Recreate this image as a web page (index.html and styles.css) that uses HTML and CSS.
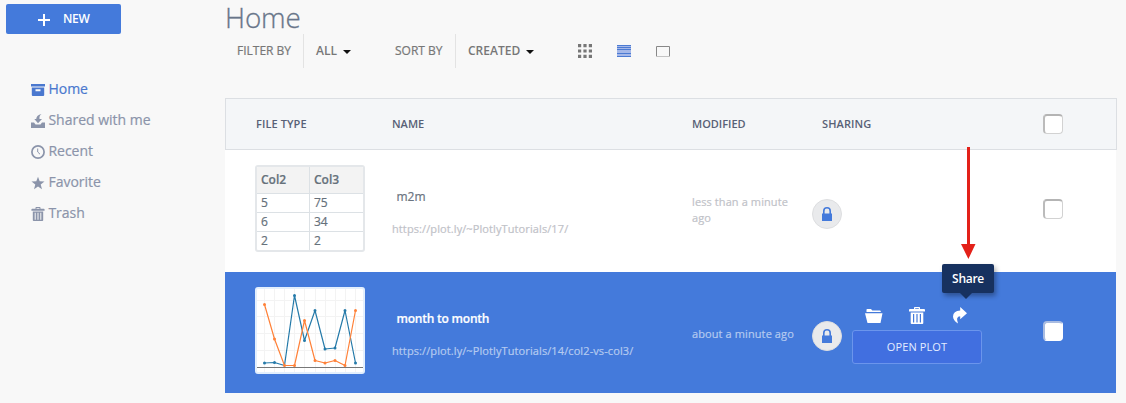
FILE: index.html
```html
<!DOCTYPE html>
<html lang="en">
<head>
<meta charset="utf-8">
<title>Home</title>
<link rel="stylesheet" href="styles.css">
</head>
<body>
<svg class="defs" width="0" height="0">
  <symbol id="trash" viewBox="0 0 16 17"><path fill-rule="evenodd" d="M5 2V.8Q5 0 5.8 0h4.4q.8 0 .8.8V2h4q1 0 1 1v1.5H0V3q0-1 1-1zM6.2 1.2V2h3.6v-.8zM1.7 5.5h12.6V16q0 1-1 1H2.700q-1 0-1-1zM4 7v8.500h1.200V7zm3.400 0v8.500h1.200V7zm3.400 0v8.500H12V7z"/></symbol>
  <symbol id="lock" viewBox="0 0 10 14"><path d="M0 6.500h1V4a4 4 0 0 1 8 0v2.500h1V14H0zM2.600 6.500h4.800V4a2.400 2.400 0 0 0-4.800 0z"/></symbol>
</svg>
<div class="app">
  <aside class="sidebar">
    <button class="new"><svg width="12" height="12" viewBox="0 0 12 12"><path d="M6 0v12M0 6h12" stroke="#fff" stroke-width="2"/></svg><span>NEW</span></button>
    <nav class="nav">
      <a class="nav-item active"><svg width="14" height="12" viewBox="0 0 14 12"><path fill-rule="evenodd" d="M0 0h14v2.500H0zM.8 3.500h12.400V11q0 1-1 1H1.800q-1 0-1-1zM4.500 5.300v2h5v-2z"/></svg><span>Home</span></a>
      <a class="nav-item"><svg width="14" height="14" viewBox="0 0 14 14"><path d="M0 8.500h3l1.500 2h5l1.500-2h3V14H0zM10.500 0Q8 1.500 8.500 5H11L7 9.300 3.300 5h1.900Q5.500 1 10.500 0z"/></svg><span>Shared with me</span></a>
      <a class="nav-item"><svg width="14" height="14" viewBox="0 0 14 14"><g fill="none" stroke="currentColor"><circle cx="7" cy="7" r="6.100" stroke-width="1.700"/><path d="M6.700 3.500V7l2.300 2.200" stroke-width="1"/></g></svg><span>Recent</span></a>
      <a class="nav-item"><svg width="14" height="14" viewBox="0 0 14 14"><path d="M7 .8l1.700 4.400 4.800.2-3.800 3 1.300 4.800L7 10.500l-4 2.700 1.300-4.800-3.800-3 4.800-.2z"/></svg><span>Favorite</span></a>
      <a class="nav-item"><svg width="14" height="14"><use href="#trash"/></svg><span>Trash</span></a>
    </nav>
  </aside>
  <main class="main">
    <h1 class="title">Home</h1>
    <div class="toolbar">
      <span class="label filter">FILTER BY</span>
      <span class="choice all">ALL<i class="caret"></i></span>
      <span class="label sort">SORT BY</span>
      <span class="choice created">CREATED<i class="caret"></i></span>
      <span class="views">
        <svg width="14" height="14" viewBox="0 0 14 14"><path fill="#777" d="M0 0h3.200v3.200H0zM5.400 0h3.200v3.200H5.400zM10.800 0H14v3.200h-3.200zM0 5.400h3.200v3.200H0zM5.400 5.400h3.200v3.200H5.400zM10.800 5.400H14v3.200h-3.200zM0 10.800h3.200V14H0zM5.400 10.800h3.200V14H5.400zM10.800 10.800H14V14h-3.200z"/></svg>
        <svg width="14" height="12" viewBox="0 0 14 12"><path fill="#a5b8e9" d="M0 0h14v12H0z"/><path stroke="#4c7bd3" d="M0 .5h14M0 2.500h14M0 4.500h14M0 8.500h14M0 11.500h14"/></svg>
        <svg width="14" height="11" viewBox="0 0 14 11"><path fill="none" stroke="#888" d="M13.500 10V.5H.5V10"/><path stroke="#c4c4c4" d="M0 10.500h14"/></svg>
      </span>
    </div>
    <section class="files">
      <div class="row head">
        <span class="h-type">FILE TYPE</span><span class="h-name">NAME</span><span class="h-mod">MODIFIED</span><span class="h-share">SHARING</span><span class="check"></span>
      </div>
      <div class="row file">
        <div class="thumb grid">
          <b>Col2</b><b>Col3</b><span>5</span><span>75</span><span>6</span><span>34</span><span>2</span><span>2</span>
        </div>
        <div class="info"><div class="name">m2m</div><div class="url">https://plot.ly/~PlotlyTutorials/17/</div></div>
        <div class="modified">less than a minute<br>ago</div>
        <div class="privacy"><svg width="10" height="14"><use href="#lock"/></svg></div>
        <div></div>
        <span class="check"></span>
      </div>
      <div class="row file selected">
        <div class="thumb plot">
          <svg width="106" height="83" viewBox="0 0 106 83">
            <path stroke="#f3f3f3" fill="none" d="M7.500 0v83M17.500 0v83M27.500 0v83M37.500 0v83M47.500 0v83M58.500 0v83M68.500 0v83M78.500 0v83M88.500 0v83M98.500 0v83M0 11.500h106M0 27.500h106M0 44.500h106M0 61.500h106"/>
            <path stroke="#777" d="M0 78.500h106"/>
            <g fill="none" stroke-width="1.200" stroke-linejoin="round">
              <path class="blue" d="M7.500 74l10-.5 10 3 10-70 10 45 10.500-30 10 38.500 10-1 10-37.500 10.500 52.500"/>
              <path class="orange" d="M7.500 15.500l10 34.500 10 26.500h10l10-45 10.500 40 10 2.500 10-2.500 10 5 10.500-55"/>
            </g>
            <path class="blue dots" d="M7.500 74h0M17.500 73.500h0M37.500 6.500h0M47.500 51.500h0M58 21.500h0M68 60h0M78 59h0M88 21.500h0M98.500 74h0"/>
            <path class="orange dots" d="M7.500 15.500h0M17.500 50h0M27.500 76.500h0M37.500 76.500h0M47.500 31.500h0M58 71.500h0M68 74h0M78 71.500h0M88 76.500h0M98.500 21.500h0"/>
          </svg>
        </div>
        <div class="info"><div class="name">month to month</div><div class="url">https://plot.ly/~PlotlyTutorials/14/col2-vs-col3/</div></div>
        <div class="modified">about a minute ago</div>
        <div class="privacy"><svg width="10" height="14"><use href="#lock"/></svg></div>
        <div class="actions">
          <div class="icons">
            <svg width="18" height="14" viewBox="0 0 18 14"><path d="M1.500 3V.7Q1.500 0 2.200 0H6l1.300 1.500h7.500q1 0 1 1V3zM0 4.200h17.500L15.500 14h-13z"/></svg>
            <svg width="16" height="17"><use href="#trash"/></svg>
            <svg width="14" height="17" viewBox="0 0 14 17"><path d="M7.200 0L14 6.200 7.200 12.200V9.300Q2.300 9.700 5 16.500.2 13.500 0 9.500.2 3.700 7.200 3.400z"/></svg>
          </div>
          <button class="open"><span>OPEN PLOT</span></button>
          <div class="tooltip"><span>Share</span></div>
        </div>
        <span class="check"></span>
      </div>
    </section>
  </main>
</div>
<svg class="arrow" width="16" height="112" viewBox="0 0 16 112"><path fill="#e32119" d="M7 0h3v97h5.500L8.400 112 1 97h6z"/></svg>
</body>
</html>
```
FILE: styles.css
```css
* { box-sizing: border-box; }
body { margin: 0; background: #f8f8f8; font-family: "Open Sans", sans-serif; font-size: 11px; color: #6b7480; overflow: hidden; }
.defs { position: absolute; }
svg { display: block; fill: currentColor; flex: none; }
button { font: inherit; padding: 0; }
.app { display: grid; grid-template-columns: 225px 892px; height: 403px; }
.sidebar { padding: 4px 0 0 6px; }
.new { display: flex; align-items: center; gap: 13px; width: 115px; height: 30px; padding-left: 32px; border: 0; border-radius: 2px; background: #447adb; color: #fff; font-weight: 600; font-size: 12px; letter-spacing: -.3px; }
.new span { margin-top: -2px; }
.new svg { margin-top: 2px; }
.nav { padding: 39px 0 0 25px; }
.nav-item { display: flex; align-items: center; gap: 4px; height: 31px; color: #8b94aa; font-size: 14px; }
.nav-item span { margin-left: -.6px; -webkit-text-stroke: .2px; }
.nav-item svg { margin-top: 3px; }
.nav-item.active { color: #4a78cf; }
.title { margin: 0; height: 34px; font-size: 27.800px; line-height: 34px; color: #69768a; font-weight: 300; -webkit-text-stroke: .3px #69768a; letter-spacing: -.1px; }
.toolbar { display: flex; height: 34px; align-items: center; font-size: 12px; color: #777; }
.label { height: 34px; line-height: 34px; border-right: 1px solid #e3e3e3; -webkit-text-stroke: .2px; }
.filter { width: 79px; padding-left: 12px; }
.sort { width: 61px; }
.choice { display: flex; align-items: center; gap: 6px; padding-left: 12px; font-weight: 600; height: 32px; align-self: flex-start; }
.all { width: 91px; }
.created { width: 122px; }
.caret { margin-top: 3px; border: 4px solid transparent; border-top-color: #111; border-bottom: 0; }
.views { display: flex; align-items: center; gap: 25px; }
.files { margin-top: 30px; }
.row { display: grid; grid-template-columns: 137px 300px 120px 40px 191px 20px; align-items: center; padding-left: 30px; }
.head { height: 52px; border: 1px solid #dcdfe3; background: #f4f6f8; font-weight: 600; color: #586176; }
.head > span:not(.check) { margin: -2px 0 0 -1px; }
.head > .h-type { padding-left: 1px; letter-spacing: .1px; }
.head .h-share { grid-column: span 2; padding-left: 10px; letter-spacing: .1px; }
.head .check { grid-column: 6; margin-left: -1px; }
.file { height: 122px; background: #fff; width: 891px; }
.selected { height: 121px; background: #447adb; color: #fff; }
.thumb { width: 110px; height: 87px; margin-top: -5px; border: 2px solid #e4e7ea; border-radius: 3px; background: #fff; overflow: hidden; }
.grid { display: grid; grid-template-columns: 53px 53px; grid-template-rows: 27px 19px 19px 18px; color: #66717b; font-size: 12px; }
.grid > * { padding-left: 4px; line-height: 18px; border-bottom: 1px solid #dce1e5; -webkit-text-stroke: .2px; }
.grid > :nth-child(odd) { border-right: 1px solid #dce1e5; }
.grid > :nth-child(n+7) { border-bottom: 0; }
.grid b { font-weight: 600; background: #f3f3f3; line-height: 26px; }
.plot { border-color: #e3effd; margin-top: -4px; }
.blue { stroke: #257aa9; }
.orange { stroke: #ff8138; }
.dots { stroke-width: 3; stroke-linecap: round; }
.name { padding-left: 4.500px; font-size: 12px; line-height: 18px; -webkit-text-stroke: .2px; }
.url { margin-top: 15px; line-height: 16px; color: #bfc2c8; letter-spacing: .1px; -webkit-text-stroke: .2px; }
.info { margin-top: 3px; }
.selected .name { font-weight: 600; letter-spacing: -.22px; }
.selected .url { color: #b5caf0; }
.modified { margin-top: -2px; line-height: 16px; color: #bfc2c8; letter-spacing: .1px; -webkit-text-stroke: .2px; }
.selected .modified { color: #b5caf0; margin-top: 2px; }
.privacy { display: grid; place-items: center; width: 30px; height: 30px; margin: 5px 0 0; border: 1px solid #dddee0; border-radius: 50%; background: #e9eaec; color: #447adb; }
.selected .privacy { margin-top: 7px; }
.check { width: 20px; height: 20px; border: 1px solid #d2d2d2; border-top: 2px solid #b4b4b4; border-left: 2px solid #bbb; border-radius: 4px; background: #fff; }
.file .check { margin-top: -4px; }
.selected .check { margin-top: -3px; border-color: #a9bce1 #fff #fff #a9bce1; }
.actions { position: relative; width: 130px; padding-top: 6px; }
.icons { display: grid; grid-template-columns: 44px 44px 14px; padding-left: 13px; align-items: center; height: 17px; margin-bottom: 6px; }
.open { width: 130px; height: 34px; padding-bottom: 2px; border: 1px solid #6b95ec; border-radius: 3px; background: #416fe0; color: #e4ecff; display: grid; place-items: center; letter-spacing: .1px; }
.tooltip { position: absolute; left: 90px; top: -37px; width: 52px; height: 29px; border-radius: 2px; background: #17315f; color: #fff; font-size: 12px; font-weight: 600; letter-spacing: -.3px; display: grid; place-items: center; box-shadow: 2px 3px 5px #0005; }
.tooltip::after { content: ""; position: absolute; left: 18px; top: 29px; border: 6px solid transparent; border-top-color: #17315f; border-bottom: 0; }
.arrow { position: absolute; left: 960px; top: 147px; }
```
